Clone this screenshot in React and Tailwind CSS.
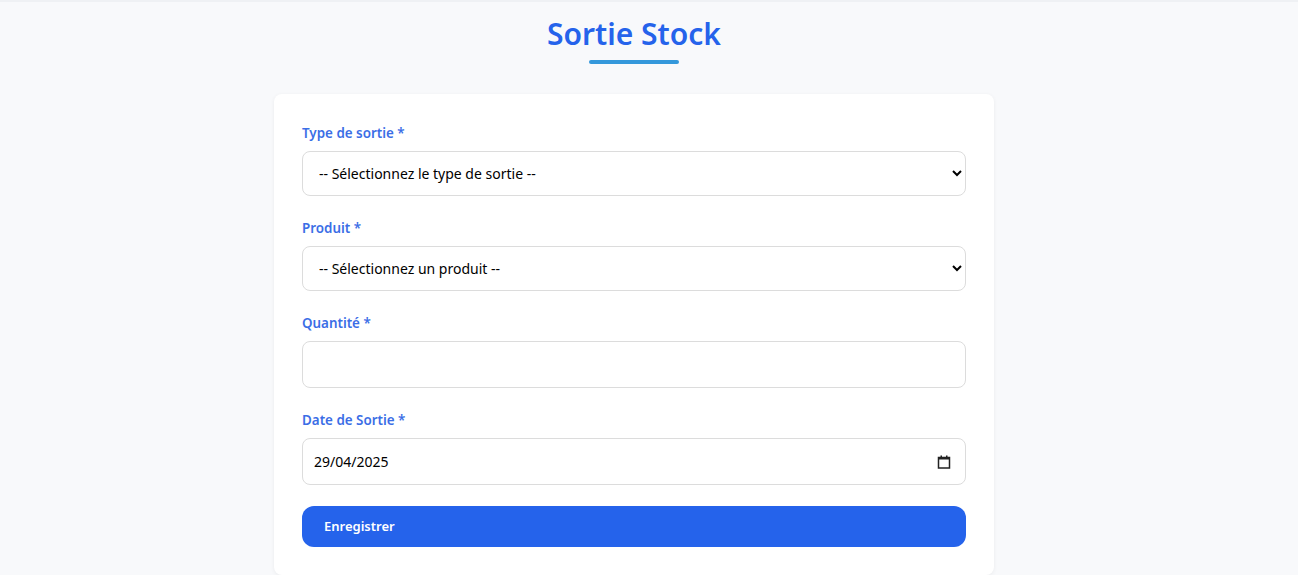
import React, { useState } from "react";

const font = { fontFamily: '"Segoe UI", "Noto Sans", "Open Sans", sans-serif' };

const Field = ({ label, children }) => (
    <div className="mb-[23px]">
        <label className="block mb-2 text-[13.4px] font-semibold text-[#3b6ee6] leading-[19px]">
            {label}
        </label>
        {children}
    </div>
);

export default function App() {
    const [type, setType] = useState("");
    const [produit, setProduit] = useState("");
    const [quantite, setQuantite] = useState("");

    return (
        <div className="min-h-screen bg-[#f8f9fb] border-t-2 border-[#eff1f4]" style={font}>
            <div className="mr-[30px]">
                <div className="flex flex-col items-center pt-[12px]">
                    <h1 className="text-[30px] font-semibold text-[#2563eb] leading-[39px]">
                        Sortie Stock
                    </h1>
                    <div className="w-[90px] h-[4px] rounded-full bg-[#3498db] mt-[7px]" />
                </div>

                <div className="mx-auto mt-[30px] w-[720px] bg-white rounded-lg shadow-[0_1px_4px_rgba(0,0,0,0.06)] px-[28px] pt-[30px] pb-[28px]">
                    <Field label="Type de sortie *">
                        <select
                            value={type}
                            onChange={(e) => setType(e.target.value)}
                            className="w-full h-[45px] px-[12px] border border-[#dcdcdc] rounded-lg bg-white text-[14px] text-black"
                        >
                            <option value="">-- Sélectionnez le type de sortie --</option>
                            <option value="vente">Vente</option>
                            <option value="perte">Perte</option>
                        </select>
                    </Field>

                    <Field label="Produit *">
                        <select
                            value={produit}
                            onChange={(e) => setProduit(e.target.value)}
                            className="w-full h-[45px] px-[12px] border border-[#dcdcdc] rounded-lg bg-white text-[14px] text-black"
                        >
                            <option value="">-- Sélectionnez un produit --</option>
                        </select>
                    </Field>

                    <Field label="Quantité *">
                        <input
                            type="number"
                            value={quantite}
                            onChange={(e) => setQuantite(e.target.value)}
                            className="w-full h-[47px] px-[12px] border border-[#dcdcdc] rounded-lg bg-white text-[14px] text-black outline-none"
                        />
                    </Field>

                    <Field label="Date de Sortie *">
                        <div className="flex items-center w-full h-[47px] pl-[11px] pr-[14px] border border-[#dcdcdc] rounded-lg bg-white">
                            <input
                                type="text"
                                readOnly
                                value="29/04/2025"
                                className="flex-1 text-[14px] text-black outline-none bg-transparent"
                            />
                            <svg width="14" height="14" viewBox="0 0 14 14">
                                <rect x="1.5" y="2.5" width="11" height="10.5" fill="none" stroke="#222" strokeWidth="1.5" />
                                <rect x="1" y="2" width="12" height="2.5" fill="#222" />
                                <rect x="3.5" y="0.5" width="1.5" height="2.5" fill="#222" />
                                <rect x="9" y="0.5" width="1.5" height="2.5" fill="#222" />
                            </svg>
                        </div>
                    </Field>

                    <button className="w-full h-[41px] -mt-[2px] rounded-xl bg-[#2563eb] text-white text-[13px] font-semibold text-left px-[22px]">
                        Enregistrer
                    </button>
                </div>
            </div>
        </div>
    );
}
